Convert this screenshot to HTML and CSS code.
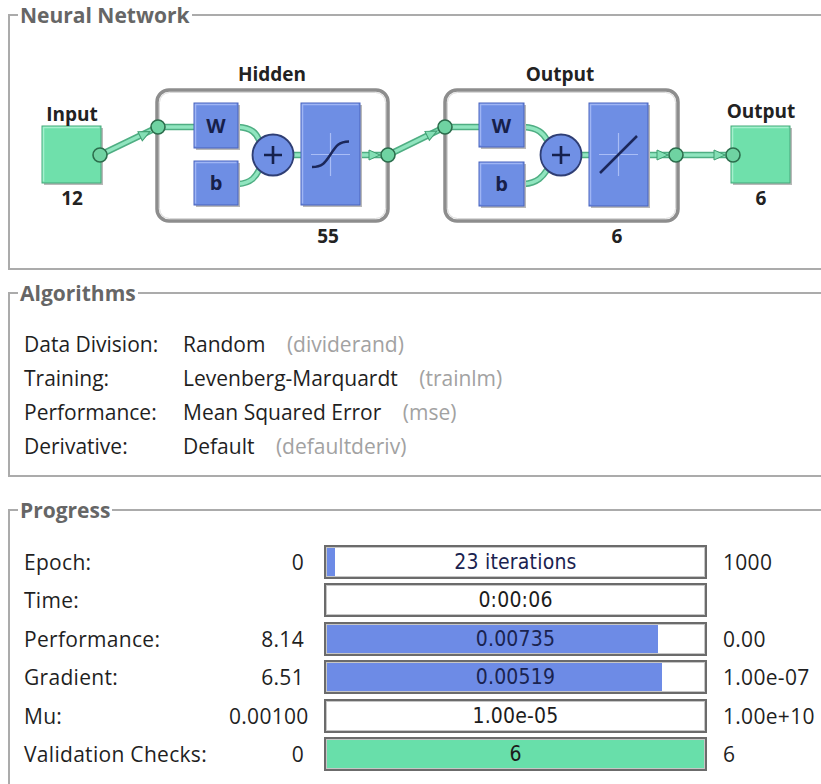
FILE: index.html
```html
<!DOCTYPE html>
<html lang="en">
<head>
    <meta charset="UTF-8">
    <title>Neural Network Training</title>
    <link rel="stylesheet" href="styles.css">
</head>
<body>
    <fieldset class="group network">
        <legend>Neural Network</legend>
        <svg class="diagram" width="811" height="242" viewBox="10 26 811 242">
            <defs>
                <path id="w1" d="M100 155 L158 127"/>
                <path id="w2" d="M158 127 H194"/>
                <path id="w3" d="M238 127 C252 128 256 133 259 140"/>
                <path id="w4" d="M238 184 C252 183 256 176 259 170"/>
                <path id="w5" d="M293 155 H301"/>
                <path id="w6" d="M360 155 H388"/>
                <path id="w7" d="M388 155 L445 127"/>
                <path id="w8" d="M445 127 H479"/>
                <path id="w9" d="M524 127 C538 128 543 133 547 140"/>
                <path id="w10" d="M524 184 C538 183 543 176 547 170"/>
                <path id="w11" d="M581 155 H589"/>
                <path id="w12" d="M648 155 H733"/>
                <polygon id="head" points="0,0 -11,-5 -11,5"/>
            </defs>

            <!-- layer frames -->
            <rect class="frame" x="157" y="90" width="231" height="131" rx="12"/>
            <rect class="frame-in" x="159.5" y="92.5" width="226" height="126" rx="10"/>
            <rect class="frame" x="445" y="90" width="233" height="131" rx="12"/>
            <rect class="frame-in" x="447.5" y="92.5" width="228" height="126" rx="10"/>

            <!-- wires -->
            <g class="wire">
                <use href="#w1"/><use href="#w2"/><use href="#w3"/><use href="#w4"/>
                <use href="#w5"/><use href="#w6"/><use href="#w7"/><use href="#w8"/>
                <use href="#w9"/><use href="#w10"/><use href="#w11"/><use href="#w12"/>
            </g>
            <g class="wire-core">
                <use href="#w1"/><use href="#w2"/><use href="#w3"/><use href="#w4"/>
                <use href="#w5"/><use href="#w6"/><use href="#w7"/><use href="#w8"/>
                <use href="#w9"/><use href="#w10"/><use href="#w11"/><use href="#w12"/>
            </g>
            <g class="arrow">
                <use href="#head" transform="translate(150 131.5) rotate(-25.8)"/>
                <use href="#head" transform="translate(437 131) rotate(-26.2)"/>
                <use href="#head" transform="translate(380 155)"/>
                <use href="#head" transform="translate(668 155)"/>
                <use href="#head" transform="translate(725 155)"/>
            </g>

            <!-- input / output squares -->
            <rect class="shade" x="44" y="128" width="59" height="57"/>
            <rect class="io" x="42" y="126" width="59" height="57"/>
            <path class="io-hi" d="M43.5 181.5 V127.5 H99.5"/>
            <rect class="shade" x="733" y="128" width="59" height="57"/>
            <rect class="io" x="731" y="126" width="59" height="57"/>
            <path class="io-hi" d="M732.5 181.5 V127.5 H788.5"/>

            <!-- hidden layer blocks -->
            <rect class="shade" x="196" y="105" width="44" height="45"/>
            <rect class="blk" x="194" y="103" width="44" height="45"/>
            <path class="blk-hi" d="M195.5 146.5 V104.5 H236.5"/>
            <rect class="shade" x="196" y="163" width="44" height="44"/>
            <rect class="blk" x="194" y="161" width="44" height="44"/>
            <path class="blk-hi" d="M195.5 203.5 V162.5 H236.5"/>
            <rect class="shade" x="303" y="105" width="59" height="102"/>
            <rect class="blk" x="301" y="103" width="59" height="102"/>
            <path class="blk-hi" d="M302.5 203.5 V104.5 H358.5"/>
            <path class="axis" d="M330.5 133 V176 M311 154.5 H350"/>
            <path class="curve" d="M312 167 C322 167 325 163 330.5 154.5 C336 146 339 141.5 349 141.5"/>
            <circle class="sum" cx="273" cy="155" r="20.5"/>
            <path class="plus" d="M264 155 H282 M273 146 V164"/>
            <text class="sym" x="216" y="133">W</text>
            <text class="sym" x="216" y="190">b</text>

            <!-- output layer blocks -->
            <rect class="shade" x="481" y="105" width="45" height="44"/>
            <rect class="blk" x="479" y="103" width="45" height="44"/>
            <path class="blk-hi" d="M480.5 145.5 V104.5 H522.5"/>
            <rect class="shade" x="481" y="164" width="45" height="44"/>
            <rect class="blk" x="479" y="162" width="45" height="44"/>
            <path class="blk-hi" d="M480.5 204.5 V163.5 H522.5"/>
            <rect class="shade" x="591" y="105" width="59" height="103"/>
            <rect class="blk" x="589" y="103" width="59" height="103"/>
            <path class="blk-hi" d="M590.5 204.5 V104.5 H646.5"/>
            <path class="axis" d="M618.5 133 V176 M599 154.5 H638"/>
            <path class="curve" d="M600 173 L637 136"/>
            <circle class="sum" cx="561" cy="155" r="20.5"/>
            <path class="plus" d="M552 155 H570 M561 146 V164"/>
            <text class="sym" x="501.5" y="133">W</text>
            <text class="sym" x="501.5" y="191">b</text>

            <!-- junction nodes -->
            <g class="node">
                <circle cx="100" cy="155" r="7"/>
                <circle cx="158" cy="127" r="7"/>
                <circle cx="388" cy="155" r="7"/>
                <circle cx="445" cy="127" r="7"/>
                <circle cx="676" cy="155" r="7"/>
                <circle cx="733" cy="155" r="7"/>
            </g>

            <!-- labels -->
            <text class="lbl" x="72" y="121">Input</text>
            <text class="lbl" x="72" y="205">12</text>
            <text class="lbl" x="272" y="81">Hidden</text>
            <text class="lbl" x="328" y="243">55</text>
            <text class="lbl" x="560" y="81">Output</text>
            <text class="lbl" x="617" y="243">6</text>
            <text class="lbl" x="761" y="118">Output</text>
            <text class="lbl" x="761" y="205">6</text>
        </svg>
    </fieldset>

    <fieldset class="group algorithms">
        <legend>Algorithms</legend>
        <div class="algo-list">
            <span>Data Division:</span>
            <span>Random <em>(dividerand)</em></span>
            <span>Training:</span>
            <span>Levenberg-Marquardt <em>(trainlm)</em></span>
            <span>Performance:</span>
            <span>Mean Squared Error <em>(mse)</em></span>
            <span>Derivative:</span>
            <span>Default <em>(defaultderiv)</em></span>
        </div>
    </fieldset>

    <fieldset class="group progress">
        <legend>Progress</legend>
        <div class="progress-grid">
            <span>Epoch:</span>
            <span class="start">0</span>
            <div class="bar blue" style="--fill: 2.4%"><span>23 iterations</span></div>
            <span class="end">1000</span>

            <span>Time:</span>
            <span class="start"></span>
            <div class="bar"><span>0:00:06</span></div>
            <span class="end"></span>

            <span>Performance:</span>
            <span class="start">8.14</span>
            <div class="bar blue" style="--fill: 87.6%"><span>0.00735</span></div>
            <span class="end">0.00</span>

            <span>Gradient:</span>
            <span class="start">6.51</span>
            <div class="bar blue" style="--fill: 88.7%"><span>0.00519</span></div>
            <span class="end">1.00e-07</span>

            <span>Mu:</span>
            <span class="start">0.00100</span>
            <div class="bar"><span>1.00e-05</span></div>
            <span class="end">1.00e+10</span>

            <span>Validation Checks:</span>
            <span class="start">0</span>
            <div class="bar green" style="--fill: 100%"><span>6</span></div>
            <span class="end">6</span>
        </div>
    </fieldset>
</body>
</html>
```

FILE: styles.css
```css
body {
    margin: 0;
    padding-top: 4px;
    font-family: "Open Sans", Arial, sans-serif;
    color: #1f1f1f;
    background: #fff;
    overflow: hidden;
}

/* group boxes */
.group {
    margin: 0 -30px 0 8px;
    padding: 0 14px;
    border: 2px solid #ababab;
    min-inline-size: 0;
}
.group legend {
    margin-left: -6px;
    padding: 0 2px;
    font-size: 21px;
    line-height: 22px;
    font-weight: bold;
    color: #666;
}

/* network diagram */
.diagram { display: block; margin-left: -14px; }
.frame { fill: none; stroke: #8d8d8d; stroke-width: 3.5; }
.frame-in { fill: none; stroke: #d9d9d9; stroke-width: 1; }
.wire use { fill: none; stroke: #4fae83; stroke-width: 6.5; stroke-linecap: round; }
.wire-core use { fill: none; stroke: #90e5bf; stroke-width: 3.5; stroke-linecap: round; }
.arrow use { fill: #84dfb5; stroke: #3f9d71; stroke-width: 1; }
.shade { fill: #b9b9b9; }
.io { fill: #6fe0ab; stroke: #47a77a; stroke-width: 1; }
.io-hi { fill: none; stroke: #a5f0cd; stroke-width: 1.5; }
.blk { fill: #6e8ee4; stroke: #4863bd; stroke-width: 1; }
.blk-hi { fill: none; stroke: #9fb5f4; stroke-width: 1.5; }
.axis { fill: none; stroke: #a9bdf6; stroke-width: 1.2; }
.curve { fill: none; stroke: #1b275a; stroke-width: 2.5; }
.sum { fill: #7090e5; stroke: #2f3e74; stroke-width: 1.8; }
.plus { fill: none; stroke: #16214d; stroke-width: 2.6; }
.sym { font-family: "Open Sans", Arial, sans-serif; font-size: 20px; font-weight: bold; fill: #17204a; text-anchor: middle; }
.node circle { fill: #6fd3a2; stroke: #2c6d4c; stroke-width: 1.6; }
.lbl { font-family: "Open Sans", Arial, sans-serif; font-size: 19px; font-weight: bold; fill: #222; text-anchor: middle; }

/* algorithms */
.algorithms { margin-top: 12px; padding-top: 23px; padding-bottom: 12px; }
.algo-list {
    display: grid;
    grid-template-columns: 159px auto;
    font-size: 21px;
    line-height: 34px;
    white-space: nowrap;
}
.algo-list em { font-style: normal; color: #a2a2a2; margin-left: 16px; }

/* progress */
.progress { margin-top: 22px; padding-top: 24px; padding-bottom: 20px; }
.progress-grid {
    display: grid;
    grid-template-columns: 185px 75px 383px 1fr;
    grid-auto-rows: 34px;
    column-gap: 20px;
    row-gap: 4.4px;
    align-items: center;
    font-size: 21px;
    letter-spacing: 0.3px;
    white-space: nowrap;
}
.progress-grid .start { text-align: right; }
.progress-grid .end { margin-left: -4px; }
.bar {
    height: 34px;
    box-sizing: border-box;
    border: 2px solid #6b6b6b;
    box-shadow: inset 0 0 0 1px #c6c6c6;
    background: #fff;
    display: flex;
    align-items: center;
    justify-content: center;
    font-family: "DejaVu Sans Condensed", "DejaVu Sans", Verdana, sans-serif;
    font-stretch: condensed;
    font-size: 21px;
    letter-spacing: 0.2px;
    color: #1c1c1c;
}
.bar.blue {
    background: linear-gradient(to right, #6d8be6 var(--fill), #fff var(--fill));
    color: #1a2350;
}
.bar.green { background: linear-gradient(to right, #68dfaa var(--fill), #fff var(--fill)); }
```
